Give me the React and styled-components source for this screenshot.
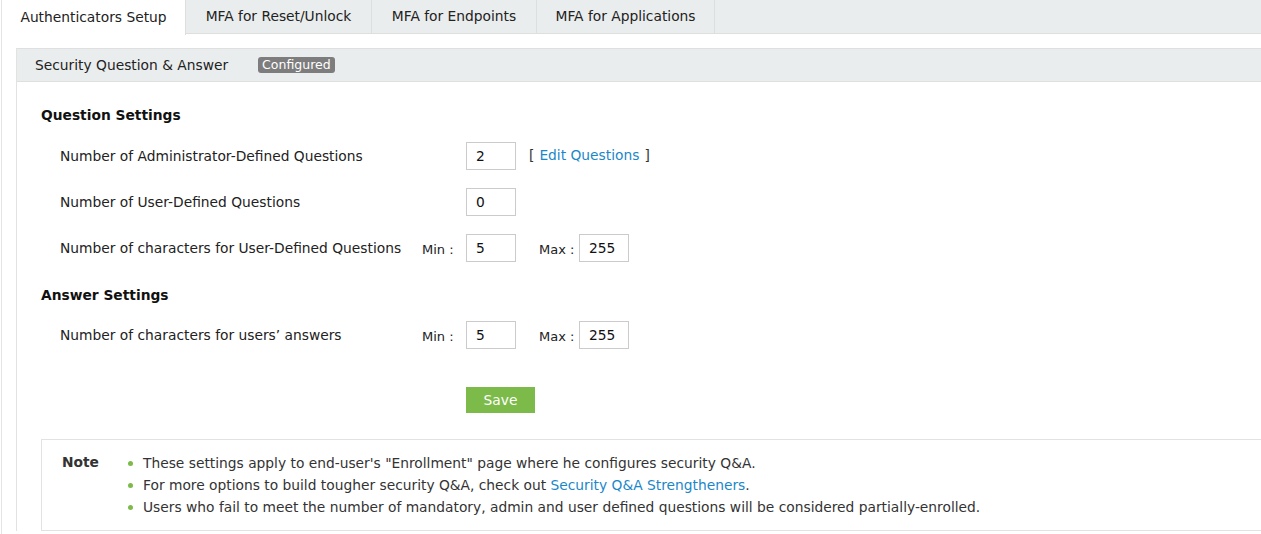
import React from "react";
import styled, { createGlobalStyle } from "styled-components";

const Global = createGlobalStyle`
  html, body { margin: 0; padding: 0; background: #fff; overflow: hidden; }
  body { font-family: "DejaVu Sans", Verdana, sans-serif; font-size: 13.8px; color: #222; }
`;

const Page = styled.div`
  width: 1290px;
  margin-left: 1px;
  border-left: 1px solid #e4e4e4;
  min-height: 534px;
`;

const TabBar = styled.div`
  display: flex;
  height: 34px;
  background: #eaeded;
  border-bottom: 1px solid #dedede;
  box-sizing: border-box;
`;

const Tab = styled.div`
  display: flex;
  align-items: center;
  justify-content: center;
  width: ${(p) => p.$w}px;
  border-right: 1px solid #dedede;
  background: ${(p) => (p.$active ? "#fff" : "transparent")};
  height: ${(p) => (p.$active ? "35px" : "34px")};
  box-sizing: border-box;
  color: #222;
  white-space: nowrap;
  padding-bottom: 2px;
`;

const Content = styled.div`
  padding: 14px 0 0 14px;
`;

const Panel = styled.div`
  border-left: 1px solid #e2e2e2;
`;

const SubHeader = styled.div`
  display: flex;
  align-items: center;
  height: 34px;
  box-sizing: border-box;
  background: #eaeded;
  border-top: 1px solid #dfdfdf;
  border-bottom: 1px solid #dfdfdf;
  padding-left: 18px;
`;

const Badge = styled.span`
  margin-left: 30px;
  background: #7d7d7d;
  color: #fff;
  font-size: 12.5px;
  padding: 1px 4px;
  border-radius: 3px;
  line-height: 14px;
`;

const Body = styled.div`
  padding: 0 0 0 24px;
`;

const SectionTitle = styled.div`
  font-weight: bold;
  color: #111;
  margin-top: ${(p) => p.$top}px;
  margin-bottom: ${(p) => p.$bottom}px;
  line-height: 16px;
`;

const Rows = styled.div`
  display: flex;
  flex-direction: column;
  gap: 18px;
  padding-left: 19px;
`;

const Row = styled.div`
  display: grid;
  grid-template-columns: 362px 44px 50px 23px 40px 50px auto;
  align-items: center;
  height: 28px;
`;

const Label = styled.div`
  grid-column: ${(p) => p.$col};
  white-space: nowrap;
`;

const SmallLabel = styled.div`
  grid-column: ${(p) => p.$col};
  font-size: 13px;
  padding-top: 3px;
  white-space: nowrap;
`;

const Input = styled.div`
  grid-column: ${(p) => p.$col};
  width: 50px;
  height: 28px;
  box-sizing: border-box;
  border: 1px solid #cbcbcb;
  display: flex;
  align-items: center;
  padding-left: 9px;
  color: #111;
`;

const EditLink = styled.div`
  grid-column: 4 / 8;
  margin-left: 13px;
  align-self: start;
  padding-top: 5px;
  white-space: nowrap;
  color: #333;
  a { color: #1b87c9; text-decoration: none; margin: 0 5px; }
`;

const SaveRow = styled.div`
  padding-left: 425px;
  margin-top: 38px;
`;

const SaveButton = styled.button`
  width: 69px;
  height: 26px;
  border: none;
  background: #7cba49;
  color: #fff;
  font-family: inherit;
  font-size: 13.8px;
  padding: 0;
`;

const NoteBox = styled.div`
  margin-top: 26px;
  border: 1px solid #e2e2e2;
  display: flex;
  padding: 12px 0 12px 20px;
`;

const NoteTitle = styled.div`
  width: 66px;
  font-weight: bold;
  color: #333;
  line-height: 20px;
`;

const NoteList = styled.ul`
  list-style: none;
  margin: 0;
  padding: 0;
  color: #333;
`;

const NoteItem = styled.li`
  position: relative;
  padding-left: 15px;
  line-height: 22px;
  &::before {
    content: "";
    position: absolute;
    left: 0;
    top: 9px;
    width: 5px;
    height: 5px;
    border-radius: 50%;
    background: #7cba49;
  }
  a { color: #1b87c9; text-decoration: none; }
`;

export default function App() {
  return (
    <>
      <Global />
      <Page>
        <TabBar>
          <Tab $active $w={184}>Authenticators Setup</Tab>
          <Tab $w={186}>MFA for Reset/Unlock</Tab>
          <Tab $w={165}>MFA for Endpoints</Tab>
          <Tab $w={178}>MFA for Applications</Tab>
        </TabBar>
        <Content>
          <Panel>
            <SubHeader>
              Security Question &amp; Answer
              <Badge>Configured</Badge>
            </SubHeader>
            <Body>
              <SectionTitle $top={25} $bottom={19}>Question Settings</SectionTitle>
              <Rows>
                <Row>
                  <Label $col={1}>Number of Administrator-Defined Questions</Label>
                  <Input $col={3}>2</Input>
                  <EditLink>[<a href="#">Edit Questions</a>]</EditLink>
                </Row>
                <Row>
                  <Label $col={1}>Number of User-Defined Questions</Label>
                  <Input $col={3}>0</Input>
                </Row>
                <Row>
                  <Label $col={1}>Number of characters for User-Defined Questions</Label>
                  <SmallLabel $col={2}>Min :</SmallLabel>
                  <Input $col={3}>5</Input>
                  <SmallLabel $col={5}>Max :</SmallLabel>
                  <Input $col={6}>255</Input>
                </Row>
              </Rows>
              <SectionTitle $top={25} $bottom={18}>Answer Settings</SectionTitle>
              <Rows>
                <Row>
                  <Label $col={1}>Number of characters for users’ answers</Label>
                  <SmallLabel $col={2}>Min :</SmallLabel>
                  <Input $col={3}>5</Input>
                  <SmallLabel $col={5}>Max :</SmallLabel>
                  <Input $col={6}>255</Input>
                </Row>
              </Rows>
              <SaveRow>
                <SaveButton>Save</SaveButton>
              </SaveRow>
              <NoteBox>
                <NoteTitle>Note</NoteTitle>
                <NoteList>
                  <NoteItem>These settings apply to end-user's "Enrollment" page where he configures security Q&amp;A.</NoteItem>
                  <NoteItem>
                    For more options to build tougher security Q&amp;A, check out <a href="#">Security Q&amp;A Strengtheners</a>.
                  </NoteItem>
                  <NoteItem>Users who fail to meet the number of mandatory, admin and user defined questions will be considered partially-enrolled.</NoteItem>
                </NoteList>
              </NoteBox>
            </Body>
          </Panel>
        </Content>
      </Page>
    </>
  );
}
